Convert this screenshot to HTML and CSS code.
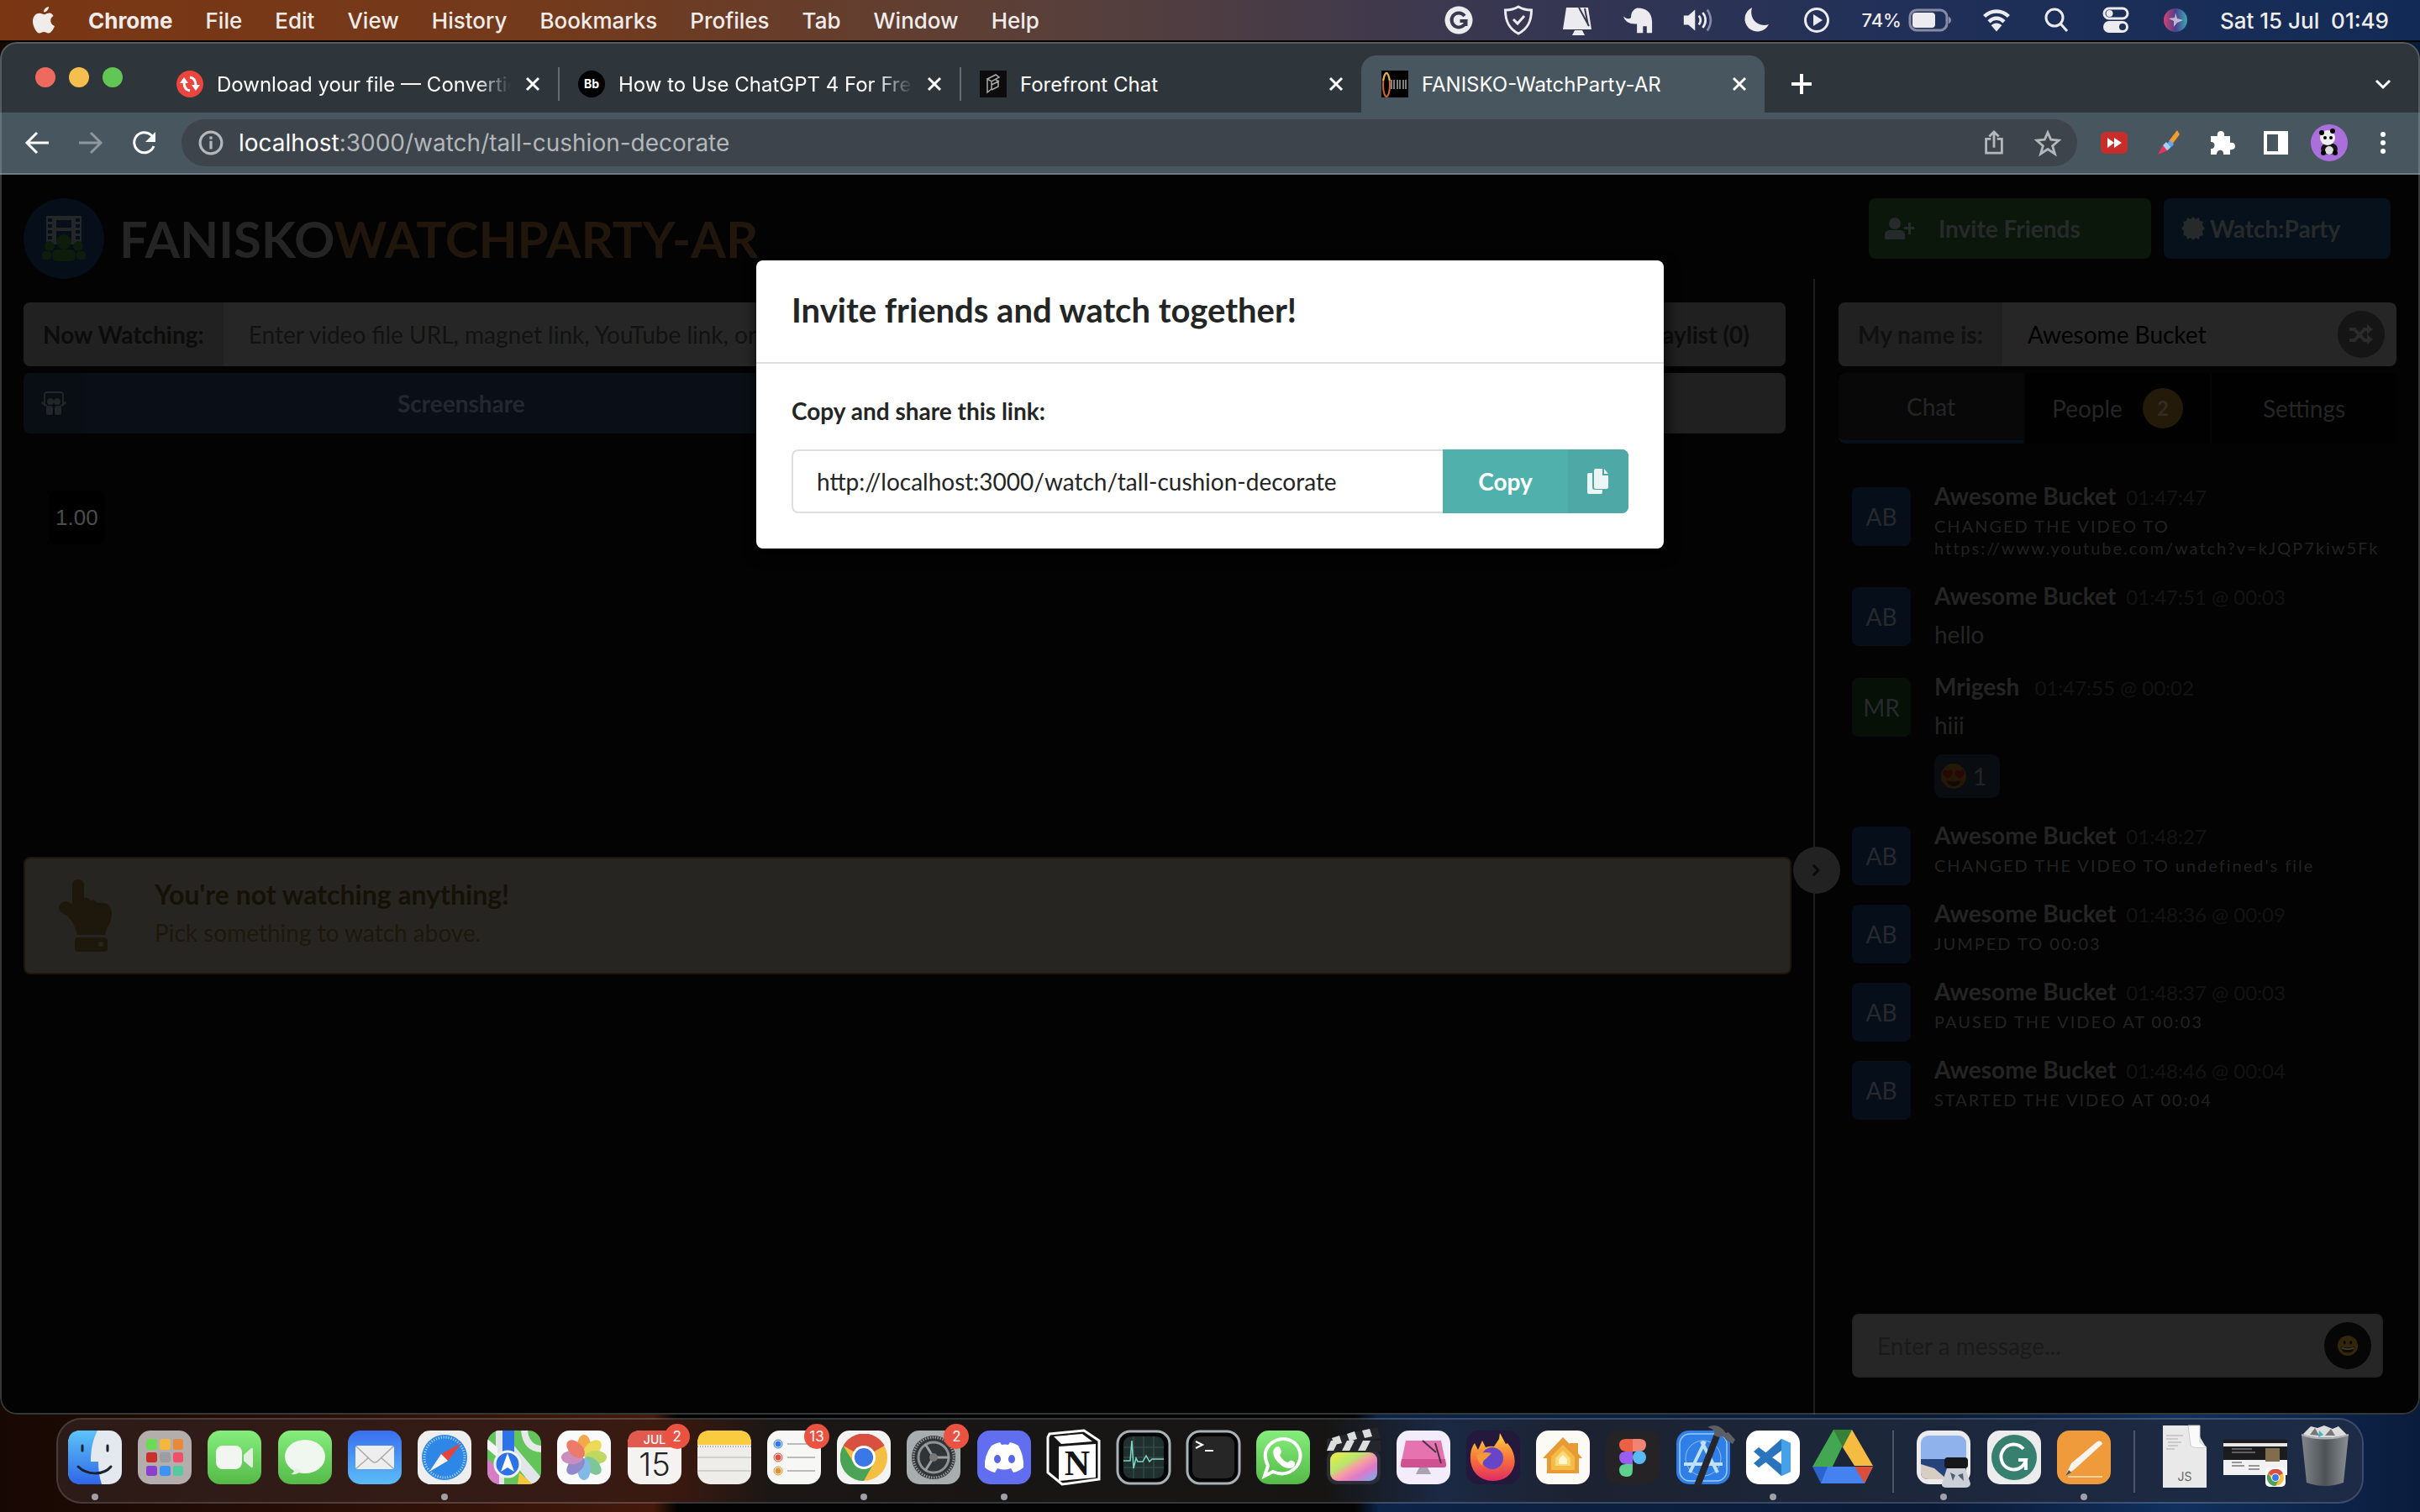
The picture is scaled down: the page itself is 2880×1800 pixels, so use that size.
FILE: index.html
```html
<!DOCTYPE html>
<html lang="en">
<head>
<meta charset="utf-8">
<title>FANISKO-WatchParty-AR</title>
<link rel="stylesheet" href="styles.css">
</head>
<body>
<header class="menubar">
  <nav class="menus">
    <svg class="apple" viewBox="0 0 28 34"><path d="M20 1c.3 3-2.800 6.600-6 6.500C13.600 4.500 17 1.200 20 1zM25.500 12c-5 3-4 10 1.500 12-1.500 4-4.300 8.500-7.200 8.500-2.300 0-2.900-1.400-5.500-1.400s-3.300 1.400-5.400 1.400C5.500 32.500 1 24.500 1 18.500 1 12 5 8.800 9 8.800c2.500 0 4.200 1.500 5.700 1.500 1.400 0 3.500-1.700 6.300-1.700 1.800 0 3.500 1.200 4.500 3.400z"/></svg>
    <b>Chrome</b><span>File</span><span>Edit</span><span>View</span><span>History</span><span>Bookmarks</span><span>Profiles</span><span>Tab</span><span>Window</span><span>Help</span>
  </nav>
  <div class="status">
    <svg viewBox="0 0 36 36"><circle cx="18" cy="18" r="16.500"/><path class="cut" d="M25 13a8.500 8.500 0 1 0 1.500 6h-7M26.500 18v7"/></svg>
    <svg viewBox="0 0 36 36"><path class="line" d="M18 2c5 3 10 4 15.500 4 0 13-4 22-15.500 28C6.500 28 2.500 19 2.500 6 8 6 13 5 18 2z"/><path class="line" d="M12 17l5 5 8-9"/></svg>
    <svg viewBox="0 0 36 36"><path d="M4 3h26l4 26H0zM14 30h9l3 6H11z"/><path class="cut thin" d="M19 3l12 22M26 4l4 20"/></svg>
    <svg viewBox="0 0 40 36"><path d="M1 13q6 5 10 2 0-10 8-13 19 0 20 18v15h-7v-9h-5v9h-8V23Q4 24 1 13z"/></svg>
    <svg viewBox="0 0 40 36"><path d="M2 12h6l9-8v28l-9-8H2z"/><path class="line" d="M22 12c3 4 3 8 0 12M27 8c5 6 5 14 0 20"/><path class="line dim" d="M33 4c6 9 6 19 0 28"/></svg>
    <svg viewBox="0 0 36 36"><path d="M12 3a15 15 0 1 0 20 20C20 27 8 17 12 3z"/></svg>
    <svg viewBox="0 0 36 36"><circle class="line" cx="18" cy="18" r="13.500"/><path d="M14 11l11 7-11 7z"/></svg>
    <span class="battery">74%<svg viewBox="0 0 52 32"><rect class="line dim" x="2" y="4" width="44" height="24" rx="8"/><rect x="5" y="7" width="27" height="18" rx="4"/><path class="dim-fill" d="M48 12c4 1 4 7 0 8z"/></svg></span>
    <svg viewBox="0 0 40 36"><path class="line wide" d="M4 13c9-9 23-9 32 0M10 20c6-6 14-6 20 0"/><path d="M20 33l-7-8c4-4 10-4 14 0z"/></svg>
    <svg viewBox="0 0 36 36"><circle class="line" cx="16" cy="15" r="10"/><path class="line" d="M23 22l8 9"/></svg>
    <svg viewBox="0 0 36 36"><rect class="line" x="4" y="4" width="28" height="12" rx="6"/><circle cx="10.500" cy="10" r="4"/><rect x="3" y="19" width="30" height="14" rx="7"/><circle class="hole" cx="26" cy="26" r="4"/></svg>
    <svg viewBox="0 0 36 36"><circle cx="18" cy="18" r="14" fill="url(#siri)"/><path d="M18 9l2 7 7 2-7 3-4 5 0-7-6-3 7-1z" opacity=".7"/></svg>
    <span>Sat 15 Jul&nbsp; 01:49</span>
  </div>
</header>

<div class="window">
  <div class="tabstrip">
    <div class="lights"><i class="red"></i><i class="yellow"></i><i class="green"></i></div>
    <div class="tab">
      <svg viewBox="0 0 32 32"><circle cx="16" cy="16" r="16" fill="#ea4640"/><path d="M16 24q-7-1-7-10M16 8q7 1 7 10" fill="none" stroke="#fff" stroke-width="3"/><path d="M4 15l5-7 5 7zM18 17l5 7 5-7z" fill="#fff"/></svg>
      <span class="fade">Download your file — Convertio</span><button aria-label="Close tab"><svg viewBox="0 0 20 20"><path d="M3 3l14 14M17 3L3 17"/></svg></button>
    </div>
    <div class="tab">
      <svg viewBox="0 0 32 32"><circle cx="16" cy="16" r="16" fill="#000"/><text x="16" y="21" text-anchor="middle" class="bb">Bb</text></svg>
      <span class="fade">How to Use ChatGPT 4 For Free</span><button aria-label="Close tab"><svg viewBox="0 0 20 20"><path d="M3 3l14 14M17 3L3 17"/></svg></button>
    </div>
    <div class="tab">
      <svg viewBox="0 0 32 32"><path fill="#0c0c0c" d="M0 0h32v32H0z"/><path d="M9 10l10-5 4 3-9 5zM9 10v16l5-4v-9M14 17l8-4v6l-8 4M19 11l4 2" fill="none" stroke="#aaa" stroke-width="1.500"/></svg>
      <span>Forefront Chat</span><button aria-label="Close tab"><svg viewBox="0 0 20 20"><path d="M3 3l14 14M17 3L3 17"/></svg></button>
    </div>
    <div class="tab active">
      <svg viewBox="0 0 32 32"><path d="M0 0h32v32H0z"/><ellipse cx="6" cy="17" rx="4" ry="14" fill="none" stroke="#d5652b" stroke-width="2"/><path d="M2 12q4-18 8 0" fill="none" stroke="#e3b83c" stroke-width="2"/><path d="M12 11v11M15 11v11M19 11v11M22 11v11M26 11v11M29 11v11" stroke="#aaa" stroke-width="1.500"/></svg>
      <span>FANISKO-WatchParty-AR</span><button aria-label="Close tab"><svg viewBox="0 0 20 20"><path d="M3 3l14 14M17 3L3 17"/></svg></button>
    </div>
    <button class="newtab" aria-label="New tab"><svg viewBox="0 0 24 24"><path d="M12 0v24M0 12h24"/></svg></button>
    <button class="tabsearch" aria-label="Search tabs"><svg viewBox="0 0 20 20"><path d="M2 6l8 8 8-8"/></svg></button>
  </div>

  <div class="toolbar">
    <div class="nav">
      <button aria-label="Back"><svg viewBox="0 0 32 32"><path d="M30 16H4M16 4L4 16l12 12"/></svg></button>
      <button aria-label="Forward" class="off"><svg viewBox="0 0 32 32"><path d="M2 16h26M16 4l12 12-12 12"/></svg></button>
      <button aria-label="Reload"><svg viewBox="0 0 32 32"><path d="M27 20a12 12 0 1 1-3-13l4 4"/><path class="solid" d="M29 3v12H17z"/></svg></button>
    </div>
    <div class="omnibox">
      <svg viewBox="0 0 28 28"><circle cx="14" cy="14" r="12"/><path d="M14 12v9M14 7v3"/></svg>
      <span class="url"><b>localhost</b>:3000/watch/tall-cushion-decorate</span>
      <svg viewBox="0 0 32 32"><path d="M12 11H6v18h20V11h-6M16 22V3M10 8l6-6 6 6"/></svg>
      <svg viewBox="0 0 32 32"><path d="M16 3l4 9 10 1-8 7 3 10-9-6-9 6 3-10-8-7 10-1z"/></svg>
    </div>
    <div class="ext">
      <svg viewBox="0 0 32 32"><rect y="3" width="32" height="26" rx="6" fill="#c92d2a"/><path d="M8 10l8 6-8 6zM16 10l9 6-9 6z" fill="#fff"/></svg>
      <svg viewBox="0 0 32 32"><path d="M17 14l10-13 3 5-9 12z" fill="#f59a2e"/><path d="M12 20l7-7 4 5-7 7z" fill="#5fa8ee"/><path d="M4 30l6-11 6 6z" fill="#e8345f"/><path d="M10 19l4-4 5 6-4 4z" fill="#a7d1f4"/></svg>
      <svg viewBox="0 0 32 32"><path d="M3 8h8c-2-8 10-8 8 0h7v8c8-2 8 10 0 8v6h-8c1-7-8-7-8 0H3v-7c6 1 6-9 0-8z" fill="#fff"/></svg>
      <svg viewBox="0 0 32 32"><path d="M4 4h25v24H4z" fill="none" stroke="#fff" stroke-width="4"/><path d="M19 4h10v24H19z" fill="#fff"/></svg>
      <svg class="avatar-pic" viewBox="0 0 44 44"><circle cx="22" cy="22" r="22" fill="#ab6fdc"/><ellipse cx="22" cy="29" rx="10" ry="7" fill="#151515"/><circle cx="20" cy="16" r="9" fill="#eee"/><circle cx="13" cy="10" r="3"/><circle cx="26" cy="8" r="3"/><circle cx="17" cy="16" r="2"/><circle cx="24" cy="16" r="2"/><ellipse cx="22" cy="31" rx="5" ry="5" fill="#ddd"/><circle cx="15" cy="34" r="3"/><circle cx="29" cy="34" r="3"/></svg>
      <svg viewBox="0 0 32 32" fill="#fff"><circle cx="16" cy="6" r="3"/><circle cx="16" cy="16" r="3"/><circle cx="16" cy="26" r="3"/></svg>
    </div>
  </div>

  <div class="page">
    <div class="pagehead">
      <svg class="logo" viewBox="0 0 96 96"><circle cx="48" cy="48" r="48" fill="#060e19"/><path fill="#242628" d="M27 21h42v34H27z"/><path fill="#060e19" d="M39 26h18v9H39zM39 39h18v13H39zM29 24h5v4h-5zM29 31h5v4h-5zM29 38h5v4h-5zM29 45h5v4h-5zM62 24h5v4h-5zM62 31h5v4h-5zM62 38h5v4h-5zM62 45h5v4h-5z"/><g fill="#0d1c0b"><circle cx="48" cy="52" r="9"/><circle cx="31" cy="57" r="6"/><circle cx="65" cy="57" r="6"/><rect x="34" y="61" width="28" height="14" rx="6"/><rect x="22" y="63" width="11" height="10" rx="4"/><rect x="63" y="63" width="11" height="10" rx="4"/></g></svg>
      <h1>FANISKO<em>WATCHPARTY-AR</em></h1>
      <button class="btn invite"><svg viewBox="0 0 36 28"><circle cx="13" cy="8" r="7"/><path d="M1 26v-4q0-6 6-6h12q6 0 6 6v4q0 1-2 1H3q-2 0-2-1z"/><path d="M29 7h3v5h4v3h-4v6h-3v-6h-5v-3h5z"/></svg>Invite Friends</button>
      <button class="btn party"><svg viewBox="0 0 28 28"><path d="M14 0l3 3 4-2 1 4 4 1-1 4 3 4-3 3 1 5-4 1-1 4-4-2-3 3-3-3-4 2-1-4-4-1 1-5-3-3 3-4-1-4 4-1 1-4 4 2z"/></svg>Watch:Party</button>
    </div>
    <div class="columns">
      <main class="main">
        <div class="field">
          <label for="video">Now Watching:</label>
          <input id="video" placeholder="Enter video file URL, magnet link, YouTube link, or">
          <button class="playlist">Playlist (0)</button>
        </div>
        <div class="sources">
          <button class="share"><span class="sq"><svg viewBox="0 0 28 28"><path d="M3 15V4q0-3 3-3h16q3 0 3 3v11M0 12q1 4 6 5M28 12q-1 4-6 5" fill="none" stroke="#222629" stroke-width="2"/><circle cx="10" cy="12" r="4"/><circle cx="18" cy="12" r="4"/><rect x="5" y="17" width="8" height="11" rx="3"/><rect x="15" y="17" width="8" height="11" rx="3"/></svg></span><span class="cap">Screenshare</span></button>
          <button class="browser" aria-label="Browser"></button>
          <button class="file" aria-label="File"></button>
        </div>
        <div class="rate">1.00</div>
        <div class="notice">
          <svg viewBox="0 0 64 86"><path d="M16 7q0-7 7-7t7 7v15q5-1 7 3 6-2 9 3 17-2 17 13 0 9-6 17l-2 8H22q-3-14-12-23-10-3-10-9 1-7 8-8 5 0 8 4z"/><rect x="19" y="69" width="39" height="17" rx="4"/><circle cx="50" cy="77" r="3" fill="#262521"/></svg>
          <div><h2>You're not watching anything!</h2><p>Pick something to watch above.</p></div>
        </div>
      </main>
      <aside class="side">
        <button class="collapse" aria-label="Collapse"><svg viewBox="0 0 12 16"><path d="M2 2l6 6-6 6"/></svg></button>
        <div class="field">
          <label for="name">My name is:</label>
          <input id="name" value="Awesome Bucket">
          <button class="round" aria-label="Random name"><svg viewBox="0 0 28 24"><path d="M0 6h6l12 13h6M0 19h6L18 6h6" fill="none" stroke="#2b2b2b" stroke-width="4"/><path d="M21 0l7 6-7 6zM21 12l7 6-7 6z" fill="#2b2b2b"/></svg></button>
        </div>
        <div class="tabs"><button class="on">Chat</button><button>People<span class="count">2</span></button><button>Settings</button></div>
        <div class="chat">
          <article><span class="pic">AB</span><div><b>Awesome Bucket</b><time>01:47:47</time><p class="sys">CHANGED THE VIDEO TO<br>https://www.youtube.com/watch?v=kJQP7kiw5Fk</p></div></article>
          <article><span class="pic">AB</span><div><b>Awesome Bucket</b><time>01:47:51 @ 00:03</time><p>hello</p></div></article>
          <article><span class="pic mr">MR</span><div><b>Mrigesh</b><time class="far">01:47:55 @ 00:02</time><p>hiii</p><button class="react"><svg viewBox="0 0 30 30"><circle cx="15" cy="15" r="15" fill="#241806"/><path d="M8 18q-9-6-4-10 3-1 4 2 2-4 5-2 3 5-5 10zM22 18q-9-6-4-10 3-1 4 2 2-4 5-2 3 5-5 10z" fill="#280707"/><path d="M7 20q8 3 16 0-1 7-8 7t-8-7z" fill="#120a04"/></svg>1</button></div></article>
          <article><span class="pic">AB</span><div><b>Awesome Bucket</b><time>01:48:27</time><p class="sys">CHANGED THE VIDEO TO undefined's file</p></div></article>
          <article><span class="pic">AB</span><div><b>Awesome Bucket</b><time>01:48:36 @ 00:09</time><p class="sys">JUMPED TO 00:03</p></div></article>
          <article><span class="pic">AB</span><div><b>Awesome Bucket</b><time>01:48:37 @ 00:03</time><p class="sys">PAUSED THE VIDEO AT 00:03</p></div></article>
          <article><span class="pic">AB</span><div><b>Awesome Bucket</b><time>01:48:46 @ 00:04</time><p class="sys">STARTED THE VIDEO AT 00:04</p></div></article>
        </div>
        <div class="field compose">
          <input placeholder="Enter a message..." aria-label="Message">
          <button class="round dark" aria-label="Emoji"><svg viewBox="0 0 28 28"><circle cx="14" cy="14" r="13" fill="#33260a"/><ellipse cx="10" cy="10" rx="1.500" ry="2.500" fill="#0c0803"/><ellipse cx="18" cy="10" rx="1.500" ry="2.500" fill="#0c0803"/><path d="M5 15q9 3 18 0-1 8-9 8t-9-8z" fill="#120b03"/><path d="M6 16q8 3 16 0v2q-8 3-16 0z" fill="#3a3a38"/></svg></button>
        </div>
      </aside>
    </div>
    <div class="overlay">
      <section class="modal" role="dialog" aria-labelledby="modal-title">
        <h2 id="modal-title">Invite friends and watch together!</h2>
        <div class="modal-body">
          <label for="link">Copy and share this link:</label>
          <div class="copyrow">
            <input id="link" value="http://localhost:3000/watch/tall-cushion-decorate" readonly>
            <button><span class="cap">Copy</span><span class="sq"><svg viewBox="0 0 26 30"><path d="M0 7q0-2 2-2h4v17q0 3 3 3h9v3q0 2-2 2H2q-2 0-2-2z"/><path d="M8 2q0-2 2-2h8v8h7v14q0 2-2 2H10q-2 0-2-2z"/><path d="M20 0l5 6h-5z"/></svg></span></button>
          </div>
        </div>
      </section>
    </div>
  </div>
</div>

<footer class="dockarea">
<nav class="dock">
  <span class="app run"><svg viewBox="0 0 64 64"><rect width="64" height="64" rx="15" fill="#e4e8ef"/><path d="M15 0h20c-6 12-8 24-8 37h9c0 9 1 18 4 27H15Q0 64 0 49V15Q0 0 15 0z" fill="url(#finder)"/><path d="M17 18v6M47 18v6M12 43c10 10 30 11 39 0" class="ink"/></svg></span>
  <span class="app"><svg viewBox="0 0 64 64"><rect width="64" height="64" rx="15" fill="#b3aeac"/><rect x="10" y="10" width="13" height="13" rx="3" fill="#6bdb54"/><rect x="26" y="10" width="13" height="13" rx="3" fill="#f5b63c"/><rect x="42" y="10" width="12" height="13" rx="3" fill="#e8883a"/><rect x="10" y="26" width="13" height="12" rx="3" fill="#c8302a"/><rect x="26" y="26" width="13" height="12" rx="3" fill="#9a9ea3"/><rect x="42" y="26" width="12" height="12" rx="3" fill="#f0506a"/><rect x="10" y="42" width="13" height="12" rx="3" fill="#8b3fd0"/><rect x="26" y="42" width="13" height="12" rx="3" fill="#3a93f5"/><rect x="42" y="42" width="12" height="12" rx="3" fill="#56c9a0"/></svg></span>
  <span class="app"><svg viewBox="0 0 64 64"><rect width="64" height="64" rx="15" fill="url(#green)"/><rect x="10" y="18" width="31" height="28" rx="8" fill="#f1f6f0"/><path d="M43 29l9-8q2-1 2 2v19q0 3-2 2l-9-8z" fill="#e2efe0"/></svg></span>
  <span class="app"><svg viewBox="0 0 64 64"><rect width="64" height="64" rx="15" fill="url(#green)"/><ellipse cx="32" cy="31" rx="24" ry="20" fill="#f0f7ef"/><path d="M20 44q0 6-5 8 8 1 13-4z" fill="#e4f0e2"/></svg></span>
  <span class="app"><svg viewBox="0 0 64 64"><rect width="64" height="64" rx="15" fill="url(#mail)"/><rect x="9" y="18" width="46" height="28" rx="3" fill="#eee"/><path d="M10 19l18 17q4 4 8 0l18-17M10 45l15-13M54 45L39 32" fill="none" stroke="#aaa" stroke-width="1.500"/></svg></span>
  <span class="app run"><svg viewBox="0 0 64 64"><rect width="64" height="64" rx="15" fill="#eee"/><circle cx="32" cy="32" r="27" fill="#2e86e6"/><circle cx="32" cy="32" r="24" fill="none" stroke="#b8dcfa" stroke-width="3" stroke-dasharray="1 2"/><path d="M52 15L28 28l8 8z" fill="#ea4335"/><path d="M14 49l14-21 8 8z" fill="#f4f4f4"/></svg></span>
  <span class="app"><svg viewBox="0 0 64 64"><clipPath id="mc"><rect width="64" height="64" rx="15"/></clipPath><g clip-path="url(#mc)"><path fill="#64c45c" d="M0 0h64v64H0z"/><path fill="#e3e6e9" d="M10 0h10v64H10zM30 16l34 40v8H52L28 34z"/><path fill="#2e72e8" d="M18 0h14v34H18z"/><path fill="#f6f6f6" d="M0 10l12 10v12L0 22z"/><path fill="#d77dc5" d="M0 34l14 12v18H0z"/><path fill="#f5c83c" d="M38 50l16 14H36z"/><path d="M44 0q2 22 22 22" fill="none" stroke="#e6e8ea" stroke-width="8"/></g><circle cx="24" cy="40" r="15" fill="#2e72e8" stroke="#f2f2f2" stroke-width="3"/><path fill="#fff" d="M24 27l8 22-8-5-8 5z"/></svg></span>
  <span class="app"><svg viewBox="0 0 64 64"><rect width="64" height="64" rx="15" fill="#fafafa"/><g opacity=".85"><ellipse cx="32" cy="18" rx="8" ry="13" fill="#f29a2e"/><ellipse cx="32" cy="18" rx="8" ry="13" fill="#e9d53a" transform="rotate(45 32 32)"/><ellipse cx="32" cy="18" rx="8" ry="13" fill="#b4d348" transform="rotate(90 32 32)"/><ellipse cx="32" cy="18" rx="8" ry="13" fill="#68bd88" transform="rotate(135 32 32)"/><ellipse cx="32" cy="18" rx="8" ry="13" fill="#6faee2" transform="rotate(180 32 32)"/><ellipse cx="32" cy="18" rx="8" ry="13" fill="#8075c5" transform="rotate(225 32 32)"/><ellipse cx="32" cy="18" rx="8" ry="13" fill="#c27ab4" transform="rotate(270 32 32)"/><ellipse cx="32" cy="18" rx="8" ry="13" fill="#ea6551" transform="rotate(315 32 32)"/></g></svg></span>
  <span class="app"><svg viewBox="0 0 64 64"><rect width="64" height="64" rx="15" fill="#f4f3f2"/><path d="M0 20v-5Q0 0 15 0h34q15 0 15 15v5z" fill="#e2594d"/><text x="32" y="16" text-anchor="middle" class="jul">JUL</text><text x="32" y="54" text-anchor="middle" class="day">15</text></svg><i class="badge">2</i></span>
  <span class="app"><svg viewBox="0 0 64 64"><rect width="64" height="64" rx="15" fill="#eeede9"/><path d="M0 17v-2Q0 0 15 0h34q15 0 15 15v2z" fill="#f8cc3e"/><path d="M0 32h64M0 48h64" stroke="#c9c8c6" stroke-width="1.500"/><path d="M0 19h64" stroke="#aaa" stroke-width="2" stroke-dasharray="1 2"/></svg></span>
  <span class="app"><svg viewBox="0 0 64 64"><rect width="64" height="64" rx="15" fill="#f7f7f6"/><path d="M24 16h33M24 32h33M24 48h33" stroke="#bbb" stroke-width="2"/><g fill="none" stroke-width="1"><circle cx="13" cy="16" r="5" stroke="#3478f0"/><circle cx="13" cy="32" r="5" stroke="#e0503d"/><circle cx="13" cy="48" r="5" stroke="#e09333"/></g><circle cx="13" cy="16" r="3.500" fill="#3478f0"/><circle cx="13" cy="32" r="3.500" fill="#e0503d"/><circle cx="13" cy="48" r="3.500" fill="#e09333"/></svg><i class="badge">13</i></span>
  <span class="app run"><svg viewBox="0 0 64 64"><rect width="64" height="64" rx="15" fill="#f3f3f3"/><use href="#chrome" x="4" y="4" width="56" height="56"/></svg></span>
  <span class="app"><svg viewBox="0 0 64 64"><rect width="64" height="64" rx="15" fill="#a8adb0"/><circle cx="32" cy="32" r="26" fill="#303436"/><circle cx="32" cy="32" r="24" fill="none" stroke="#999" stroke-width="3" stroke-dasharray="1.500 1.500"/><circle cx="32" cy="32" r="18" fill="none" stroke="#8e9396" stroke-width="3"/><path d="M32 32h19M32 32L22 16M32 32L22 48" stroke="#9a9fa2" stroke-width="3"/><circle cx="32" cy="32" r="5" fill="#777"/></svg><i class="badge">2</i></span>
  <span class="app run"><svg viewBox="0 0 64 64"><rect width="64" height="64" rx="15" fill="#626ef0"/><path d="M17 18q5-3 10-4l2 3q4-1 8 0l2-3q5 1 10 4 7 13 6 26-6 5-12 6l-3-5q-8 3-16 0l-3 5q-6-1-12-6-1-14 8-26z" fill="#fff"/><ellipse cx="24" cy="34" rx="4" ry="5" fill="#5865e4"/><ellipse cx="41" cy="34" rx="4" ry="5" fill="#5865e4"/></svg></span>
  <span class="app"><svg viewBox="0 0 64 64"><path d="M3 4L44 0l18 12v46L18 64 1 50V8z" fill="#151515" stroke="#fff" stroke-width="3"/><path d="M8 7l34-3 12 9-37 3z" fill="#fff"/><path d="M14 19l44-3v40l-44 4z" fill="#fff"/><text x="36" y="53" text-anchor="middle" class="notion">N</text></svg></span>
  <span class="app"><svg viewBox="0 0 64 64"><rect x="1" y="1" width="62" height="62" rx="15" fill="#050505" stroke="#a9b2b6" stroke-width="3"/><rect x="8" y="7" width="48" height="50" rx="9" fill="#20302f"/><path d="M8 20h48M8 32h48M8 44h48M20 7v50M32 7v50M44 7v50" stroke="#3c5552" stroke-width="1"/><path d="M8 36h8l2-24 2 33 3-12 2 4h6l4-7 4 7 3-3h14" fill="none" stroke="#7fd6c4" stroke-width="1.500"/></svg></span>
  <span class="app"><svg viewBox="0 0 64 64"><rect x="1" y="1" width="62" height="62" rx="15" fill="#050505" stroke="#a9b2b6" stroke-width="3"/><rect x="7" y="7" width="50" height="50" rx="9" fill="#262626"/><path d="M11 13l8 4-8 4M22 24h10" fill="none" stroke="#fff" stroke-width="2"/></svg></span>
  <span class="app"><svg viewBox="0 0 64 64"><rect width="64" height="64" rx="15" fill="url(#green)"/><path d="M10 54l4-12q-8-17 4-27 14-10 28 0 12 13 2 28-12 13-28 6z" fill="none" stroke="#fff" stroke-width="4"/><path d="M23 20q4-3 6 2 2 5-1 7 3 7 10 9 3-5 8 0 1 6-6 7-10 0-18-12-4-9 1-13z" fill="#fff"/></svg></span>
  <span class="app"><svg viewBox="0 0 64 64"><rect y="22" width="64" height="42" rx="12" fill="#2c2d38"/><path d="M0 10l60-14 4 13L2 22zM0 12h64v13H0z" fill="#25262b"/><path d="M6 9l9-3 3 9-9 2zM24 4l9-3 3 9-9 3zM42 0l9-2 3 9-9 2zM5 12h9l-6 12H0zM24 12h9l-6 12h-9zM43 12h9l-6 12h-9z" fill="#ddd"/><rect x="4" y="26" width="56" height="34" rx="9" fill="url(#rainbow)"/></svg></span>
  <span class="app"><svg viewBox="0 0 64 64"><rect width="64" height="64" rx="15" fill="#f3ecfa"/><path d="M11 12h42l6 29q0 3-3 3H8q-3 0-3-3z" fill="#e772b0"/><path d="M6 34h52l1 7q0 3-3 3H8q-3 0-3-3z" fill="#cf518f"/><path d="M27 44h10l4 8H23z" fill="#a8a4b1"/><path d="M31 12l16 14M46 15l7 24" stroke="#46333e" stroke-width="2"/></svg></span>
  <span class="app"><svg viewBox="0 0 64 64"><rect width="64" height="64" rx="15" fill="#25183d"/><path d="M32 60C15 60 4 47 5 31c0-7 2-12 5-16l4 8 5-11 4 8q5-2 10-1l6-9 1-7 7 13 2-1c7 8 10 18 8 27-3 11-12 18-25 18z" fill="url(#fox)"/><circle cx="31" cy="33" r="13" fill="#6745c8"/><path d="M12 29q8-5 18-2l-6 6q-5 3-5 9-6-5-7-13z" fill="#f69839"/></svg></span>
  <span class="app"><svg viewBox="0 0 64 64"><rect width="64" height="64" rx="15" fill="#fcfaf5"/><path d="M32 8l8 8v-1h10v12l5 6h-4v18H13V33H8z" fill="#e89a35"/><path d="M32 17l14 14v16H18V31z" fill="#f5bb48"/><path d="M32 24l9 9v9H23v-9z" fill="#fbd979"/><path d="M32 29l5 5v6H27v-6z" fill="#fff7cf"/></svg></span>
  <span class="app"><svg viewBox="0 0 64 64"><rect width="64" height="64" rx="15" fill="#252326"/><path d="M32 10h-8q-8 0-8 7t8 8h8z" fill="#ec6144"/><path d="M32 10h8q8 0 8 7t-8 8h-8z" fill="#f18475"/><path d="M32 25h-8q-8 0-8 7t8 8h8z" fill="#9b5cf0"/><circle cx="40" cy="32" r="8" fill="#5ab8f5"/><path d="M32 40h-8q-8 0-8 7t8 8 8-8z" fill="#5ed08e"/></svg></span>
  <span class="app"><svg viewBox="0 0 64 64"><rect width="64" height="64" rx="15" fill="#2f7fe6"/><rect x="4" y="4" width="56" height="56" rx="12" fill="none" stroke="#9cc9f7" stroke-width="1.500"/><circle cx="32" cy="33" r="21" fill="none" stroke="#8cc0f7" stroke-width="1"/><path d="M34 13L16 50M30 13l19 37M9 40h46" stroke="#c1e0fc" stroke-width="4"/><path d="M45 4l7 3-22 57q-5 4-9 1z" fill="#26272d"/><path d="M37-4q13-6 22 7l3-1 8 9-3 5-8-5q-3-6-8-3l-6-2q2-8-8-10z" fill="#5d5f67"/></svg></span>
  <span class="app run"><svg viewBox="0 0 64 64"><rect width="64" height="64" rx="15" fill="#fff"/><path d="M42 10l11 5v34l-11 5L9 25l6-5 27 20V24L15 44l-6-5z" fill="#2a74bd"/><path d="M42 10l11 5v34l-11 5z" fill="#44a1ea"/></svg></span>
  <span class="app"><svg viewBox="0 0 64 64"><path d="M21-1h22L31 20 11 61-4 43z" fill="#43a651"/><path d="M21-1h22L32 20z" fill="#36803a"/><path d="M43-1l25 43H46L32 20z" fill="#f6bc42"/><path d="M8 43h60L58 63H6z" fill="#4482ef"/><path d="M-4 43h18L6 63z" fill="#2c62cc"/><path d="M46 43h22L58 63z" fill="#d94f3c"/></svg></span>
  <i class="sep"></i>
  <span class="app run"><svg viewBox="0 0 64 64"><rect width="64" height="64" rx="15" fill="#ececee"/><rect x="5" y="6" width="54" height="52" rx="9" fill="#8fb2ec"/><path d="M5 34h54v18q0 6-6 6H14q-9 0-9-8z" fill="#26437b"/><path d="M5 40l16 5 15 13H14q-9 0-9-8z" fill="#d6cec3"/><rect x="33" y="32" width="28" height="13" rx="4" fill="#17181b"/><path d="M36 45h22l6 18q0 5-7 5H36q-7 0-6-5z" fill="#cbd0d8"/><path d="M40 50l6 3-3 7zM49 53l6-2 1 9z" fill="#546072"/></svg></span>
  <span class="app"><svg viewBox="0 0 64 64"><rect width="64" height="64" rx="15" fill="#ececec"/><circle cx="32" cy="32" r="27" fill="#37806f"/><path d="M43 22a15 15 0 1 0 3 13h-9M46 35v12" fill="none" stroke="#fff" stroke-width="4"/></svg></span>
  <span class="app run"><svg viewBox="0 0 64 64"><rect width="64" height="64" rx="15" fill="#ef9b3c"/><path d="M10 54l7-15 31-26q5-2 6 3L21 46z" fill="#f8f4ef"/><path d="M13 55h41" stroke="#fbd1a0" stroke-width="2"/><path d="M10 54l4-7 3 3z" fill="#555"/></svg></span>
  <i class="sep"></i>
  <span class="app"><svg viewBox="0 0 64 64"><path d="M6-6h36l16 27v47H6z" fill="#e9e9e9"/><path d="M36-6h14v20l8 6q-15 2-19-2z" fill="#fafafa" stroke="#ccc"/><path d="M10 6h20M10 10h14M12 14h16M12 18h12M10 22h10" stroke="#aaa" stroke-width="1"/><text x="32" y="60" text-anchor="middle" class="js">JS</text></svg></span>
  <span class="app"><svg viewBox="0 0 64 64"><path d="M-6 11h76v42H-6z" fill="#f2f2f2"/><path d="M-6 11h76v24H-6z" fill="#1c1c1f"/><path d="M-6 15h76v4H-6z" fill="#e7e7e7"/><path d="M44 21h17v16H44z" fill="#806d4d"/><path d="M4 22h24M4 26h28M4 38h12M4 42h15M24 42h13M24 46h13" stroke="#777" stroke-width="1.500"/><rect x="44" y="44" width="24" height="23" rx="5" fill="#fff"/><use href="#chrome" x="46" y="46" width="20" height="20"/></svg></span>
  <span class="app"><svg viewBox="0 0 64 64"><path d="M6 4l9-9 8 2 8-3 10 4 7-3 10 10-6 6H12z" fill="#ddd"/><path d="M14 5l6-8 5 9zM32 6l7-8 5 8z" fill="#777"/><path d="M25 0l5 5-6 3z" fill="#3eb3c4"/><path d="M4 5q28 7 56 0l-6 57q-22 8-44 0z" fill="url(#bin)"/><path d="M4 5q28 9 56 0" fill="none" stroke="#aeb2b6" stroke-width="2"/></svg></span>
</nav>
</footer>

<svg class="defs" aria-hidden="true"><defs>
  <linearGradient id="finder" x2="0" y2="1"><stop stop-color="#5cc4f8"/><stop offset="1" stop-color="#2f66e8"/></linearGradient>
  <linearGradient id="green" x2="0" y2="1"><stop stop-color="#85ee7c"/><stop offset="1" stop-color="#54b947"/></linearGradient>
  <linearGradient id="mail" x2="0" y2="1"><stop stop-color="#3a6fee"/><stop offset="1" stop-color="#5bbcf8"/></linearGradient>
  <linearGradient id="fox" x2="0" y2="1"><stop stop-color="#ffd53d"/><stop offset=".6" stop-color="#f5683d"/><stop offset="1" stop-color="#e02b66"/></linearGradient>
  <linearGradient id="bin"><stop stop-color="#80868a"/><stop offset=".5" stop-color="#4c5256"/><stop offset="1" stop-color="#8b9095"/></linearGradient>
  <linearGradient id="rainbow" y2="1"><stop stop-color="#f4e944"/><stop offset=".35" stop-color="#b7e86a"/><stop offset=".5" stop-color="#f7a1a0"/><stop offset=".7" stop-color="#e078c8"/><stop offset="1" stop-color="#6ab2f2"/></linearGradient>
  <linearGradient id="siri"><stop stop-color="#d8426f"/><stop offset=".5" stop-color="#4a3f90"/><stop offset="1" stop-color="#3fa7b0"/></linearGradient>
  <symbol id="chrome" viewBox="0 0 48 48"><circle cx="24" cy="24" r="24" fill="#f4bf42"/><path d="M24 24L3 12a24 24 0 0 1 42 0z" fill="#d94f40"/><path d="M24 0a24 24 0 0 1 21 12H24z" fill="#d94f40"/><path d="M3 12a24 24 0 0 0 21 36l10-18-20 0z" fill="#4aa356"/><circle cx="24" cy="24" r="12" fill="#fff"/><circle cx="24" cy="24" r="9.500" fill="#3b78e7"/></symbol>
</defs></svg>
</body>
</html>
```
FILE: styles.css
```css
* { box-sizing: border-box; }
body {
  margin: 0;
  min-height: 100vh;
  display: flex;
  flex-direction: column;
  font-family: Lato, "Noto Sans", sans-serif;
  font-size: 28px;
  background: linear-gradient(90deg, #180803 0%, #260d05 12%, #44190b 27%, #030303 28%, #040404 56%, #0c2448 57%, #0a1a36 80%, #10305e 90%, #0a1c3c 100%);
}
h1, h2, p { margin: 0; }
button, input { font: inherit; border: 0; padding: 0; margin: 0; color: inherit; background: none; }
input { min-width: 0; outline: 0; }
svg { display: block; overflow: visible; flex: none; }
.defs { position: absolute; width: 0; height: 0; }

/* Menu bar */
.menubar {
  height: 50px;
  padding: 0 37px 0 38px;
  display: flex;
  justify-content: space-between;
  align-items: center;
  font: 500 26px Inter, sans-serif;
  color: #f0ecea;
  background: linear-gradient(90deg, #7a3613 0%, #733a1c 23%, #5a4039 43%, #3b3850 60%, #213058 78%, #122b56 100%);
  border-bottom: 2px solid #090706;
}
.menus, .status { display: flex; align-items: center; white-space: nowrap; }
.menus { gap: 39px; }
.apple { width: 28px; height: 34px; fill: #f0ecea; }
.status { gap: 35px; }
.status svg { height: 36px; width: 36px; fill: #ececf0; }
.status .line { fill: none; stroke: #ececf0; stroke-width: 3; }
.status .wide { stroke-width: 5; }
.status .cut { fill: none; stroke: #383850; stroke-width: 4; }
.status .thin { stroke-width: 2; }
.status .dim { stroke: #878ba3; }
.status .dim-fill { fill: #878ba3; }
.status .hole { fill: #1f3058; }
.battery { display: flex; align-items: center; gap: 8px; font-size: 22px; }
.battery svg { width: 52px; }

/* Browser window */
.window {
  position: relative;
  flex: 1;
  display: flex;
  flex-direction: column;
  border-radius: 20px;
  overflow: hidden;
  background: #030303;
}
.window::after {
  content: "";
  position: absolute;
  inset: 0;
  border: 2px solid rgba(180, 190, 190, .28);
  border-radius: 20px;
  pointer-events: none;
}
.tabstrip {
  height: 84px;
  padding: 16px 34px 0 42px;
  display: flex;
  background: #2e363c;
  font: 24px Inter, sans-serif;
  color: #fff;
}
.tabstrip button svg { fill: none; stroke: #fff; stroke-width: 3; width: 20px; height: 20px; }
.lights { display: flex; gap: 16px; padding-top: 14px; width: 144px; }
.lights i { width: 24px; height: 24px; border-radius: 50%; }
.red { background: #ee6a5f; }
.yellow { background: #f5bf50; }
.green { background: #62c655; }
.tab {
  width: 478px;
  height: 68px;
  padding: 0 20px 0 24px;
  display: flex;
  align-items: center;
  gap: 16px;
  position: relative;
}
.tab:nth-child(3)::before, .tab:nth-child(4)::before {
  content: "";
  position: absolute;
  left: 0;
  top: 14px;
  width: 2px;
  height: 40px;
  background: #656c70;
}
.tab > svg { width: 32px; height: 32px; }
.tab span { flex: 1; white-space: nowrap; overflow: hidden; }
.tab .fade { -webkit-mask-image: linear-gradient(90deg, #000 88%, transparent); mask-image: linear-gradient(90deg, #000 88%, transparent); }
.tab.active { background: #48565f; border-radius: 18px 18px 0 0; width: 480px; }
.newtab, .tabsearch { height: 68px; }
.newtab { margin-left: 32px; }
.tabstrip .newtab svg { width: 24px; height: 24px; stroke-width: 4; }
.tabsearch { margin-left: auto; }
.bb { font: 700 14px Inter, sans-serif; fill: #fff; }

.toolbar {
  height: 74px;
  padding: 8px 28px 8px 28px;
  display: flex;
  background: #48565f;
  border-bottom: 2px solid #6d7a83;
}
.nav, .ext { display: flex; align-items: center; gap: 32px; }
.nav svg, .ext svg { width: 32px; height: 32px; }
.nav svg { fill: none; stroke: #fff; stroke-width: 3; }
.nav .solid { fill: #fff; stroke: none; }
.nav .off svg { stroke: #8e979d; }
.omnibox {
  flex: 1;
  margin: 0 28px;
  padding: 0 20px;
  display: flex;
  align-items: center;
  gap: 18px;
  border-radius: 28px;
  background: #3d444b;
  color: #b3b7ba;
  font: 28px Inter, sans-serif;
}
.omnibox svg { width: 30px; height: 30px; fill: none; stroke: #b5b8bb; stroke-width: 3; }
.omnibox svg + svg { margin-left: 16px; }
.url { flex: 1; }
.url b { font-weight: 400; color: #fff; }
.ext .avatar-pic { width: 44px; height: 44px; margin: 0 -6px; }

/* Watch page */
.page { position: relative; flex: 1; display: flex; flex-direction: column; }
.pagehead { height: 124px; padding: 28px 35px 0 28px; display: flex; align-items: flex-start; }
.logo { width: 96px; height: 96px; }
h1 { flex: 1; padding-left: 18px; font-size: 60px; line-height: 96px; color: #242424; }
h1 em { font-style: normal; color: #21160c; }
.btn {
  height: 72px;
  display: flex;
  align-items: center;
  border-radius: 8px;
  font-weight: 700;
  color: #272a2b;
}
.btn svg { fill: #272a2b; }
.invite { width: 336px; padding-left: 18px; gap: 29px; background: #0c170b; }
.invite svg { width: 36px; height: 28px; }
.party { width: 270px; margin-left: 15px; padding-left: 21px; gap: 6px; background: #07111c; }
.party svg { width: 28px; height: 28px; }
.columns { flex: 1; display: flex; }
.main { flex: 1; min-width: 0; padding: 28px 33px 0 28px; display: flex; flex-direction: column; align-items: stretch; }
.field {
  height: 76px;
  display: flex;
  align-items: center;
  border-radius: 8px;
  background: #262626;
  overflow: hidden;
}
.field label { align-self: stretch; display: flex; align-items: center; padding: 0 23px; font-weight: 700; background: #212121; color: #0c0c0c; }
.field input { flex: 1; padding-left: 30px; color: #000; }
.field input::placeholder { color: #121212; opacity: 1; }
.playlist { align-self: stretch; padding: 0 43px; font-weight: 700; background: #202020; color: #0c0c0c; }
.sources { height: 72px; margin-top: 8px; display: flex; border-radius: 8px; overflow: hidden; }
.sources button { flex: 1; }
.sources .share { flex: none; width: 41%; display: flex; align-items: center; background: #0a0f17; color: #232830; font-weight: 700; }
.share .sq { width: 72px; height: 72px; display: flex; align-items: center; justify-content: center; background: #090e14; }
.share svg { width: 28px; height: 28px; fill: #222629; }
.share .cap { flex: 1; padding-left: 110px; text-align: center; }
.browser { background: #0a0f13; }
.file { background: #202020; }
.rate {
  margin: 68px 0 0 30px;
  align-self: flex-start;
  padding: 0 8px;
  border-radius: 10px;
  background: #000;
  color: #4d4d4d;
  font: 26px/64px "Liberation Sans", sans-serif;
}
.notice {
  height: 140px;
  margin: 372px -7px 0 0;
  padding-left: 40px;
  display: flex;
  align-items: center;
  gap: 50px;
  border: 2px solid #1e1708;
  border-radius: 8px;
  background: #262521;
  color: #1e170b;
}
.notice svg { width: 64px; height: 86px; fill: #1d170c; }
.notice h2 { font-size: 32px; line-height: 40px; color: #161106; }
.notice p { line-height: 50px; }

/* Sidebar */
.side {
  position: relative;
  width: 722px;
  padding: 28px 28px 44px;
  display: flex;
  flex-direction: column;
  border-left: 2px solid #1e1e1e;
}
.side .field label { color: #101010; }
.collapse {
  position: absolute;
  left: -26px;
  top: 676px;
  width: 56px;
  height: 56px;
  border-radius: 50%;
  background: #222;
  display: flex;
  align-items: center;
  justify-content: center;
}
.collapse svg { width: 12px; height: 16px; fill: none; stroke: #0a0a0a; stroke-width: 3; }
.round { width: 56px; height: 56px; margin-right: 14px; border-radius: 50%; background: #151515; display: flex; align-items: center; justify-content: center; }
.round svg { width: 28px; height: 26px; }
.round.dark { background: #060606; }
.tabs { height: 84px; margin-top: 8px; display: flex; background: #010101; color: #252525; }
.tabs button { flex: 1; display: flex; align-items: center; justify-content: center; border-left: 2px solid #050505; }
.tabs .on { background: #080808; border: 0; border-bottom: 4px solid #06101b; border-radius: 8px 0 0 8px; }
.count { width: 48px; height: 48px; margin-left: 24px; border-radius: 50%; background: #231a0a; color: #322d22; font-size: 24px; line-height: 48px; font-weight: 700; }
.chat { flex: 1; padding: 48px 0 0 16px; display: flex; flex-direction: column; gap: 30px; color: #242424; }
.chat article { display: flex; gap: 28px; white-space: nowrap; }
.pic { width: 70px; height: 70px; margin: 4px 0 -16px; border-radius: 8px; background: #060e19; color: #26292d; line-height: 70px; text-align: center; }
.pic.mr { background: #061007; }
.chat article > div, .chat b { line-height: 28px; }
.chat time { margin-left: 12px; font-size: 24px; line-height: 20px; color: #131313; }
.chat .far { margin-left: 18px; }
.chat p { margin-top: 14px; line-height: 36px; }
.chat .sys { margin-top: 9px; font-size: 20px; line-height: 26px; letter-spacing: 2px; color: #222; }
.react { height: 52px; width: 78px; margin-top: 17px; padding-left: 8px; display: flex; align-items: center; gap: 8px; border-radius: 10px; background: #090d11; }
.react svg { width: 30px; height: 30px; }
.compose { margin: 0 16px; border: 2px solid #222; }
.compose input { padding-left: 28px; }
.compose input::placeholder { color: #1a1a1a; }
.compose .round { margin-right: 12px; }

/* Invite dialog */
.overlay { position: absolute; inset: 0; display: flex; justify-content: center; align-items: flex-start; padding-top: 102px; }
.modal { width: 1080px; border-radius: 8px; background: #fff; color: #242525; box-shadow: 2px 6px 14px 4px rgba(0, 0, 0, .5); }
.modal h2 { padding: 34px 42px 37px; font-size: 40px; line-height: 50px; border-bottom: 2px solid #dededf; }
.modal-body { padding: 36px 42px 42px; }
.modal-body label { display: block; font-weight: 700; line-height: 40px; }
.copyrow { display: flex; height: 76px; margin-top: 26px; }
.copyrow input { flex: 1; padding-left: 28px; border: 2px solid #dededf; border-right: 0; border-radius: 8px 0 0 8px; }
.copyrow button { width: 221px; display: flex; border-radius: 0 8px 8px 0; overflow: hidden; background: #50b1ac; color: #fff; font-weight: 700; line-height: 76px; }
.copyrow .cap { flex: 1; }
.copyrow .sq { width: 72px; height: 76px; display: flex; align-items: center; justify-content: center; background: #4ea8a5; }
.copyrow svg { width: 26px; height: 30px; fill: #edf6f6; }

/* Dock */
.dockarea { padding: 4px 67px 10px; }
.dock {
  height: 102px;
  padding: 13px 12px 0;
  display: flex;
  justify-content: space-between;
  border: 2px solid rgba(170, 175, 185, .3);
  border-radius: 30px;
  background: linear-gradient(90deg, #2c1b18 0%, #351b15 20%, #39190f 27%, #1a1715 31%, #161513 55%, #1b2944 60%, #1c2231 66%, #1c2638 75%, #1d2b47 100%);
  background-clip: padding-box;
}
.app { position: relative; width: 64px; height: 64px; }
.app > svg { width: 64px; height: 64px; }
.run::after { content: ""; position: absolute; left: 28px; top: 75px; width: 8px; height: 8px; border-radius: 50%; background: #a0a0a8; }
.sep { width: 2px; height: 74px; margin: 0 8px; background: #4b5566; }
.badge {
  position: absolute;
  right: -10px;
  top: -8px;
  width: 30px;
  height: 30px;
  border-radius: 50%;
  background: #ea5241;
  color: #fff;
  font: 17px/30px Inter, sans-serif;
  text-align: center;
}
.ink { fill: none; stroke: #1b2231; stroke-width: 3; stroke-linecap: round; }
.jul { font: 500 14px Inter, sans-serif; fill: #fff; }
.day { font: 300 38px Inter, sans-serif; fill: #222; }
.notion { font: 700 42px "Liberation Serif", serif; fill: #151515; }
.js { font: 14px Inter, sans-serif; fill: #666; }
```
